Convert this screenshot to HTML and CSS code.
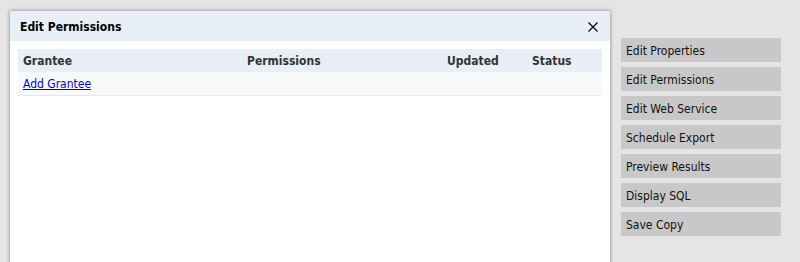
FILE: index.html
```html
<!DOCTYPE html>
<html>
<head>
<meta charset="utf-8">
<link rel="stylesheet" href="styles.css">
</head>
<body>
<div class="page">
  <div class="dialog">
    <div class="dialog-header">
      <span class="dialog-title">Edit Permissions</span>
      <svg class="dialog-close" width="10" height="10" viewBox="0 0 10 10" aria-label="Close">
        <path d="M0.5 0.5 L9.5 9.5 M9.5 0.5 L0.5 9.5" stroke="#111" stroke-width="1.4" fill="none"/>
      </svg>
    </div>
    <div class="dialog-body">
      <table class="grid">
        <thead>
          <tr>
            <th class="c-grantee">Grantee</th>
            <th class="c-perm">Permissions</th>
            <th class="c-upd">Updated</th>
            <th class="c-status">Status</th>
          </tr>
        </thead>
        <tbody>
          <tr>
            <td colspan="4"><a href="#">Add Grantee</a></td>
          </tr>
        </tbody>
      </table>
    </div>
  </div>
  <div class="actions">
    <div class="action">Edit Properties</div>
    <div class="action">Edit Permissions</div>
    <div class="action">Edit Web Service</div>
    <div class="action">Schedule Export</div>
    <div class="action">Preview Results</div>
    <div class="action">Display SQL</div>
    <div class="action">Save Copy</div>
  </div>
</div>
</body>
</html>
```
FILE: styles.css
```css
html, body {
  margin: 0;
  padding: 0;
  background: #e5e5e5;
  font-family: "DejaVu Sans Condensed", "DejaVu Sans", sans-serif;
  font-size: 12px;
  height: 262px;
  overflow: hidden;
}
.page {
  display: flex;
  align-items: flex-start;
  padding: 11px 0 0 10px;
}
.dialog {
  width: 600px;
  height: 260px;
  background: #ffffff;
  box-shadow: 0 0 4px rgba(0, 0, 0, 0.45);
  flex: none;
}
.dialog-header {
  height: 30px;
  background: #e9eff6;
  display: flex;
  align-items: center;
  justify-content: space-between;
  padding: 1px 12px 0 10px;
  box-sizing: border-box;
}
.dialog-title {
  font-weight: bold;
  color: #000;
  font-size: 12px;
}
.dialog-close {
  display: block;
  margin-top: 1px;
}
.dialog-body {
  padding: 8px;
}
.grid {
  width: 100%;
  border-collapse: collapse;
  table-layout: fixed;
}
.grid th {
  background: #e9eff6;
  color: #333;
  font-weight: bold;
  text-align: left;
  height: 23px;
  padding: 1px 5px 0;
  box-sizing: border-box;
}
.grid td {
  background: #f8f9fb;
  height: 23px;
  box-sizing: border-box;
  padding: 2px 5px 0;
  border-bottom: 1px solid #e3eaf6;
}
.grid a {
  color: #0000ee;
  text-decoration: underline;
}
.c-grantee { width: 224px; }
.c-perm { width: 200px; }
.c-upd { width: 85px; }
.actions {
  margin: 27px 0 0 11px;
  display: flex;
  flex-direction: column;
  gap: 5px;
  width: 160px;
}
.action {
  height: 24px;
  box-sizing: border-box;
  background: #c8c8c8;
  color: #111;
  display: flex;
  align-items: center;
  padding: 2px 0 0 5px;
}
```
